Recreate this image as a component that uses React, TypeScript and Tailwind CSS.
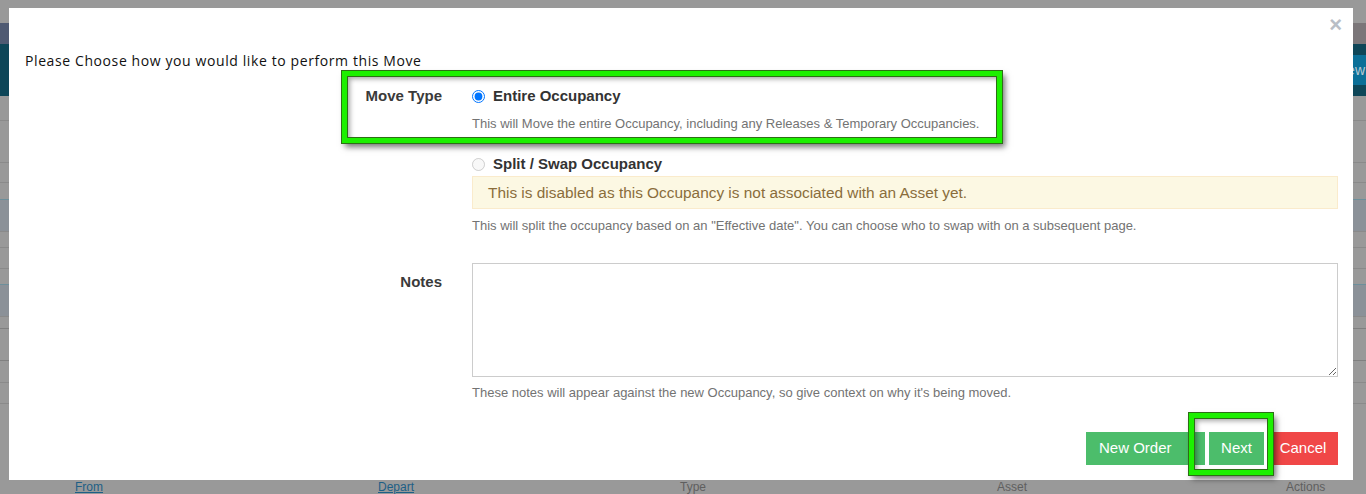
import { useState } from "react";

const rowLines = [
  { h: 25, cls: "border-b border-[#8a8a8a]" },
  { h: 42, cls: "border-b border-[#8a8a8a]" },
  { h: 20, cls: "border-b border-[#8a8a8a]" },
  { h: 16, cls: "" },
  { h: 32, cls: "border-t border-[#6d8f9b] bg-[#8b9198]" },
  { h: 16, cls: "border-t border-[#8a8a8a]" },
  { h: 21, cls: "border-t border-[#8a8a8a]" },
  { h: 16, cls: "border-t border-[#8a8a8a]" },
  { h: 32, cls: "border-t border-[#6d8f9b] bg-[#8b9198]" },
  { h: 12, cls: "border-t border-[#8a8a8a]" },
  { h: 32, cls: "border-t border-[#808080]" },
  { h: 22, cls: "border-t border-[#808080]" },
  { h: 21, cls: "border-t border-[#8a8a8a]" },
  { h: 60, cls: "border-t border-[#8a8a8a]" },
];

function Annotation({ className }: { className: string }) {
  return (
    <div
      className={`pointer-events-none absolute border-[5px] border-[#1cf000] shadow-[0_0_0_1px_#2d6e16,inset_0_0_0_1px_#2d6e16,3px_4px_6px_rgba(0,0,0,0.55),inset_3px_3px_5px_rgba(0,0,0,0.35)] ${className}`}
    />
  );
}

function PageBehind() {
  return (
    <div className="flex h-full w-full flex-col bg-[#999999] font-['Liberation_Sans',Arial,sans-serif]">
      <div className="h-[23px]" />
      <div className="flex h-[21px] justify-between">
        <div className="w-[40px] bg-[#4f5a72]" />
        <div className="w-[40px] bg-[#7b7679]" />
      </div>
      <div className="flex h-[52px] items-center justify-end bg-[#0e4658]">
        <div className="flex h-[30px] w-[60px] items-center justify-end bg-[#0b6f97] pr-[1px] text-[14px] text-[#b9c9d2]">
          Renew
        </div>
      </div>
      {rowLines.map((r, i) => (
        <div key={i} style={{ height: r.h }} className={r.cls} />
      ))}
      <div className="mt-auto grid h-[14px] grid-cols-[75px_303px_302px_317px_289px_1fr] text-[12px] leading-[14px] text-[#5f5f5f]">
        <div />
        <span className="text-[#1d5f86] underline">From</span>
        <span className="text-[#1d5f86] underline">Depart</span>
        <span>Type</span>
        <span>Asset</span>
        <span>Actions</span>
      </div>
    </div>
  );
}

export default function App() {
  const [moveType, setMoveType] = useState("entire");
  const [notes, setNotes] = useState("");

  return (
    <div className="relative h-[494px] w-[1366px] overflow-hidden">
      <PageBehind />

      <div className="absolute top-[8px] left-[9px] flex h-[472px] w-[1344px] flex-col bg-white font-['Liberation_Sans',Arial,sans-serif] text-[#333]">
        <div className="flex h-[43px] justify-end pt-[5px] pr-[11px]">
          <button className="h-[24px] text-[22px] leading-[24px] font-bold text-[#b9bec6]">×</button>
        </div>

        <h4 className="pl-[16px] font-['Open_Sans',sans-serif] text-[14px] leading-[20px] font-medium tracking-[0.6px] text-[#111]">
          Please Choose how you would like to perform this Move
        </h4>

        <div className="mt-[15px] grid grid-cols-[417px_866px] gap-x-[30px] pl-[16px]">
          <label className="text-right text-[15px] leading-[20px] font-bold text-[#3a3a3a]">Move Type</label>
          <div className="flex flex-col">
            <label className="flex h-[20px] items-center gap-[8px]">
              <input
                type="radio"
                name="moveType"
                checked={moveType === "entire"}
                onChange={() => setMoveType("entire")}
                className="m-0 h-[13px] w-[13px]"
              />
              <span className="text-[15px] font-bold text-[#333]">Entire Occupancy</span>
            </label>
            <p className="mt-[9px] text-[13px] leading-[18px] text-[#737373]">
              This will Move the entire Occupancy, including any Releases &amp; Temporary Occupancies.
            </p>

            <label className="mt-[21px] flex h-[20px] items-center gap-[8px]">
              <input type="radio" name="moveType" disabled className="m-0 h-[13px] w-[13px]" />
              <span className="text-[15px] font-bold text-[#333]">Split / Swap Occupancy</span>
            </label>
            <div className="mt-[2px] flex h-[33px] items-center border border-[#faebcc] bg-[#fcf8e3] pl-[15px] text-[15.4px] text-[#8a6d3b]">
              This is disabled as this Occupancy is not associated with an Asset yet.
            </div>
            <p className="mt-[8px] text-[13px] leading-[18px] text-[#737373]">
              This will split the occupancy based on an "Effective date". You can choose who to swap with on a subsequent page.
            </p>
          </div>

          <label className="mt-[28px] pt-[9px] text-right text-[15px] leading-[20px] font-bold text-[#3a3a3a]">Notes</label>
          <div className="mt-[28px] flex flex-col">
            <textarea
              value={notes}
              onChange={(e) => setNotes(e.target.value)}
              className="h-[114px] w-full border border-[#cccccc] px-[12px] py-[6px] text-[14px] outline-none"
            />
            <p className="mt-[7px] text-[13px] leading-[18px] text-[#737373]">
              These notes will appear against the new Occupancy, so give context on why it's being moved.
            </p>
          </div>
        </div>

        <div className="mt-[30px] flex justify-end gap-[4px] pr-[15px]">
          <button className="h-[33px] w-[119px] bg-[#4cbd6b] pl-[13px] text-left text-[15px] text-white">New Order</button>
          <button className="h-[33px] w-[55px] bg-[#4cbd6b] text-[15px] text-white">Next</button>
          <button className="h-[33px] w-[70px] bg-[#f04747] text-[15px] text-white">Cancel</button>
        </div>
      </div>

      <Annotation className="top-[71px] left-[342px] h-[72px] w-[660px]" />
      <Annotation className="top-[413px] left-[1189px] h-[62px] w-[84px]" />
    </div>
  );
}
